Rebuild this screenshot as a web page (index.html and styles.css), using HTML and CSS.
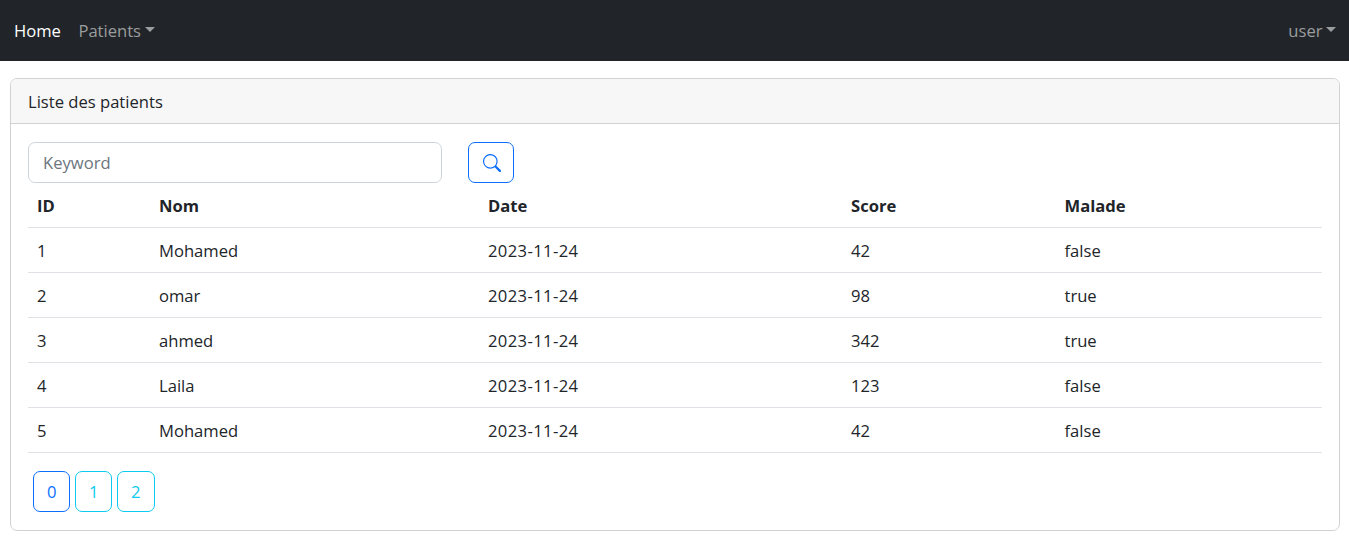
FILE: index.html
```html
<!DOCTYPE html>
<html lang="fr">
<head>
<meta charset="utf-8">
<title>Patients</title>
<link rel="stylesheet" href="styles.css">
</head>
<body>
<nav class="navbar">
  <a class="nav-link active">Home</a>
  <a class="nav-link"><span class="patients">Patients</span><i class="caret"></i></a>
  <a class="nav-link user"><span>user</span><i class="caret"></i></a>
</nav>
<main class="card">
  <header class="card-header"><span>Liste des patients</span></header>
  <div class="card-body">
    <form class="search">
      <input class="keyword" type="text" placeholder="Keyword">
      <button class="btn search-btn" type="button" aria-label="Search">
        <svg class="icon" viewBox="0 0 16 16" fill="currentColor"><path d="M11.742 10.344a6.500 6.500 0 1 0-1.397 1.398h-.001c.03.04.062.078.098.115l3.850 3.850a1 1 0 0 0 1.415-1.414l-3.850-3.850a1.007 1.007 0 0 0-.115-.1zM12 6.500a5.500 5.500 0 1 1-11 0 5.500 5.500 0 0 1 11 0z"/></svg>
      </button>
    </form>
    <table class="table">
      <colgroup><col class="c-id"><col class="c-nom"><col class="c-date"><col class="c-score"><col></colgroup>
      <thead><tr><th>ID</th><th>Nom</th><th>Date</th><th>Score</th><th>Malade</th></tr></thead>
      <tbody>
        <tr><td>1</td><td>Mohamed</td><td class="date">2023-11-24</td><td>42</td><td>false</td></tr>
        <tr><td>2</td><td>omar</td><td class="date">2023-11-24</td><td>98</td><td>true</td></tr>
        <tr><td>3</td><td>ahmed</td><td class="date">2023-11-24</td><td>342</td><td>true</td></tr>
        <tr><td>4</td><td>Laila</td><td class="date">2023-11-24</td><td>123</td><td>false</td></tr>
        <tr><td>5</td><td>Mohamed</td><td class="date">2023-11-24</td><td>42</td><td>false</td></tr>
      </tbody>
    </table>
    <div class="pages">
      <a class="btn page current">0</a>
      <a class="btn page">1</a>
      <a class="btn page">2</a>
    </div>
  </div>
</main>
</body>
</html>
```
FILE: styles.css
```css
* { box-sizing: border-box; }
body {
  margin: 0;
  background: #fff;
  color: #212529;
  font: 400 16.6px/26px "Open Sans", "Noto Sans", sans-serif;
}
.navbar {
  display: flex;
  align-items: center;
  height: 61px;
  padding: 0 13px 0 14px;
  background: #212529;
}
.nav-link {
  display: flex;
  align-items: center;
  margin-right: 17.500px;
  color: #9b9d9e;
}
.nav-link.active { color: #fff; }
.nav-link.user { margin: 0 0 0 auto; }
.caret {
  margin: 0 0 3px 3.500px;
  border: 5px solid transparent;
  border-top-color: currentColor;
  border-bottom: 0;
}
.card {
  height: 453px;
  margin: 17px 9px 0 10px;
  border: 1px solid #d2d2d3;
  border-radius: 7px;
  overflow: hidden;
}
.card-header {
  height: 45px;
  padding: 10px 17px 0;
  background: #f7f7f7;
  border-bottom: 1px solid #d2d2d3;
}
.card-body { padding: 18px 17px; }
.search { display: flex; gap: 26px; }
.keyword {
  width: 414px;
  height: 41px;
  padding: 0 14px;
  border: 1px solid #ced4da;
  border-radius: 7px;
  background: #fff;
  font: inherit;
}
.keyword::placeholder { color: #6c757d; opacity: 1; }
.btn {
  display: flex;
  align-items: center;
  justify-content: center;
  height: 41px;
  padding: 0;
  border: 1px solid currentColor;
  border-radius: 7px;
  background: #fff;
  color: #0d6efd;
}
.search-btn { width: 46px; padding-left: 1px; }
.icon { width: 18px; height: 18px; }
.table {
  width: 100%;
  table-layout: fixed;
  border-collapse: separate;
  border-spacing: 0;
}
.c-id { width: 122px; }
.c-nom { width: 329px; }
.c-date { width: 363px; }
.c-score { width: 213.500px; }
th, td {
  height: 45px;
  padding: 2px 9px 0;
  border-bottom: 1px solid #dee2e6;
  text-align: left;
}
th { font-weight: 700; }
.date { letter-spacing: .38px; }
.pages {
  display: flex;
  gap: 4.500px;
  padding: 18px 5px 0;
}
.page { width: 37.700px; color: #0dcaf0; }
.page.current { width: 37.300px; color: #0d6efd; }
```
